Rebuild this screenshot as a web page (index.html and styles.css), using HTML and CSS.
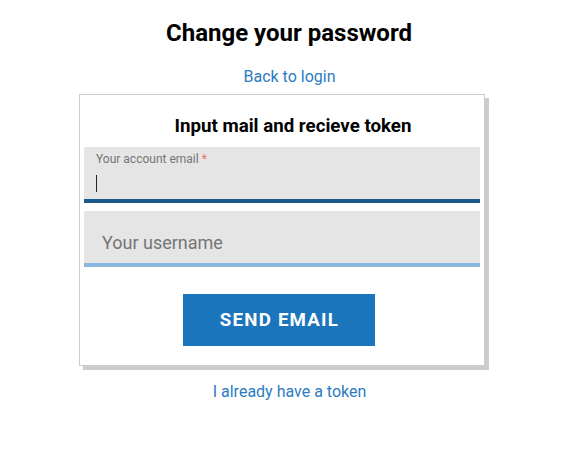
FILE: index.html
```html
<!DOCTYPE html>
<html>
<head>
<meta charset="utf-8">
<link rel="stylesheet" href="styles.css">
</head>
<body>
<div class="page">
  <h1 class="headline">Change your password</h1>
  <a class="link back">Back to login</a>
  <div class="card">
    <h2 class="card-title">Input mail and recieve token</h2>
    <div class="field field-focused">
      <label class="field-label">Your account email <span class="req">*</span></label>
      <div class="caret"></div>
    </div>
    <div class="field field-idle">
      <span class="placeholder">Your username</span>
    </div>
    <div class="actions">
      <button class="btn">SEND EMAIL</button>
    </div>
  </div>
  <a class="link token">I already have a token</a>
</div>
</body>
</html>
```
FILE: styles.css
```css
* { box-sizing: border-box; }
html, body { margin: 0; padding: 0; background: #fff; }
body { font-family: Roboto, "Liberation Sans", sans-serif; color: #000; }
.page {
  width: 410px;
  margin-left: 79px;
  display: flex;
  flex-direction: column;
  align-items: stretch;
}
.headline {
  margin: 19px 0 0 0;
  padding-left: 10px;
  font-size: 24px;
  font-weight: 700;
  line-height: 28px;
  text-align: center;
}
.link {
  color: #2b7bc2;
  font-size: 16px;
  line-height: 19px;
  text-align: center;
  padding-left: 11px;
  cursor: pointer;
}
.back { margin-top: 20px; }
.card {
  margin-top: 8px;
  width: 406px;
  height: 272px;
  border: 1px solid #cccccc;
  box-shadow: 4px 4px 0 #cccccc;
  padding: 0 4px;
  background: #fff;
  display: flex;
  flex-direction: column;
}
.card-title {
  margin: 21px 0 0 0;
  padding-left: 22px;
  font-size: 18.72px;
  font-weight: 700;
  line-height: 21px;
  text-align: center;
}
.field {
  background: #e5e5e5;
  height: 56px;
  position: relative;
}
.field-focused {
  margin-top: 10px;
  border-bottom: 4px solid #1b5a8c;
  padding: 5px 12px 0 12px;
}
.field-label {
  display: block;
  font-size: 12px;
  line-height: 14px;
  color: #757575;
}
.req { color: #e57361; }
.caret {
  margin-top: 9px;
  width: 1px;
  height: 17px;
  background: #222;
}
.field-idle {
  margin-top: 8px;
  border-bottom: 4px solid #8ab7de;
  padding: 0 18px;
  display: flex;
  align-items: center;
}
.placeholder {
  font-size: 18px;
  color: #757575;
  padding-top: 11px;
}
.actions {
  display: flex;
  justify-content: center;
  margin-top: 27px;
  padding-right: 6px;
}
.btn {
  width: 192px;
  height: 52px;
  background: #1b75bc;
  color: #fff;
  border: none;
  font-family: Roboto, "Liberation Sans", sans-serif;
  font-size: 18.72px;
  font-weight: 700;
  letter-spacing: 1.2px;
  padding: 0 0 0 1px;
}
.token { margin-top: 16px; }
```
